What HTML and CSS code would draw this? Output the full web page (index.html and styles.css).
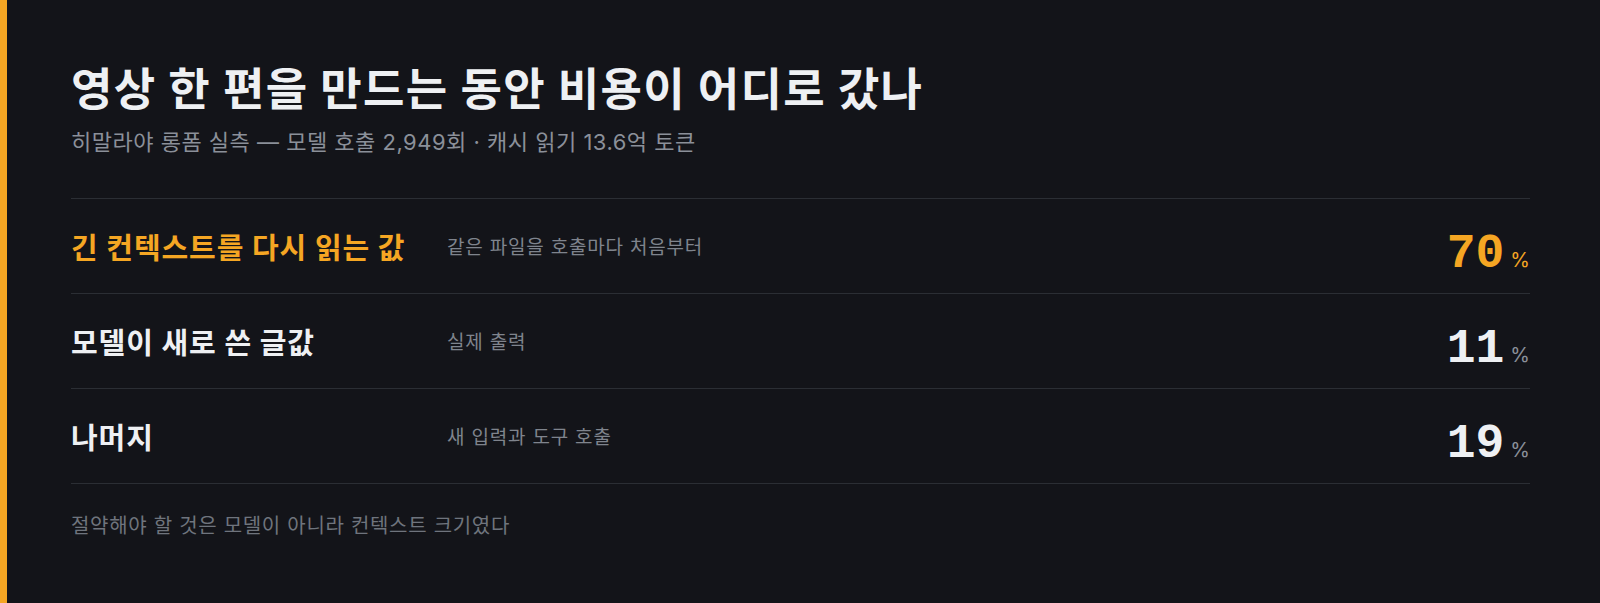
FILE: index.html
```html
<!DOCTYPE html>
<html lang="ko">
<head>
  <meta charset="UTF-8">
  <meta name="viewport" content="width=device-width, initial-scale=1.0">
  <title>비용이 어디로 갔나</title>
  <link rel="stylesheet" href="styles.css">
</head>
<body>

<div class="page">
  <!-- Heading -->
  <header class="head">
    <h1 class="title">영상 한 편을 만드는 동안 비용이 어디로 갔나</h1>
    <p class="sub">히말라야 롱폼 실측 — 모델 호출 2,949회 · 캐시 읽기 13.6억 토큰</p>
  </header>

  <!-- Cost breakdown -->
  <div class="rows">
    <div class="row hot">
      <div class="label">긴 컨텍스트를 다시 읽는 값</div>
      <div class="desc">같은 파일을 호출마다 처음부터</div>
      <div class="share"><span class="num">70</span><span class="pct">%</span></div>
    </div>
    <div class="row">
      <div class="label">모델이 새로 쓴 글값</div>
      <div class="desc">실제 출력</div>
      <div class="share"><span class="num">11</span><span class="pct">%</span></div>
    </div>
    <div class="row">
      <div class="label">나머지</div>
      <div class="desc">새 입력과 도구 호출</div>
      <div class="share"><span class="num">19</span><span class="pct">%</span></div>
    </div>
  </div>

  <p class="note">절약해야 할 것은 모델이 아니라 컨텍스트 크기였다</p>
</div>

</body>
</html>
```

FILE: styles.css
```css
/* General Reset */
* {
    margin: 0;
    padding: 0;
    box-sizing: border-box;
}

html, body {
    height: 100%;
}

body {
    font-family: 'Inter', 'Noto Sans CJK KR', sans-serif;
    background-color: #131419;
    color: #eef0f3;
}

.page {
    min-height: 100%;
    border-left: 7px solid #f5a623;
    padding: 63px 70px 40px 64px;
}

.title {
    font-size: 45px;
    font-weight: 700;
    line-height: 1.2;
    letter-spacing: 1.3px;
    color: #eef0f3;
}

.sub {
    margin-top: 11px;
    font-size: 22px;
    line-height: 1.3;
    letter-spacing: 0.5px;
    color: #8b9099;
}

.rows {
    margin-top: 41px;
    border-bottom: 1px solid #2b2e34;
}

.row {
    display: grid;
    grid-template-columns: 376px 1fr auto;
    align-items: center;
    height: 95px;
    border-top: 1px solid #2b2e34;
}

.label {
    font-size: 29px;
    font-weight: 700;
    letter-spacing: 0.9px;
    color: #eef0f3;
}

.desc {
    font-size: 19px;
    letter-spacing: 0.8px;
    color: #7f848d;
}

.share {
    display: flex;
    align-items: baseline;
    gap: 6px;
    margin-top: 16px;
}

.num {
    font-family: 'Liberation Mono', monospace;
    font-size: 48px;
    font-weight: 700;
    line-height: 1;
    color: #eef0f3;
}

.pct {
    font-size: 20px;
    color: #8b9099;
}

.hot .label,
.hot .num,
.hot .pct {
    color: #f5a623;
}

.note {
    margin-top: 26px;
    font-size: 20px;
    letter-spacing: 0.7px;
    color: #6f747d;
}
```
